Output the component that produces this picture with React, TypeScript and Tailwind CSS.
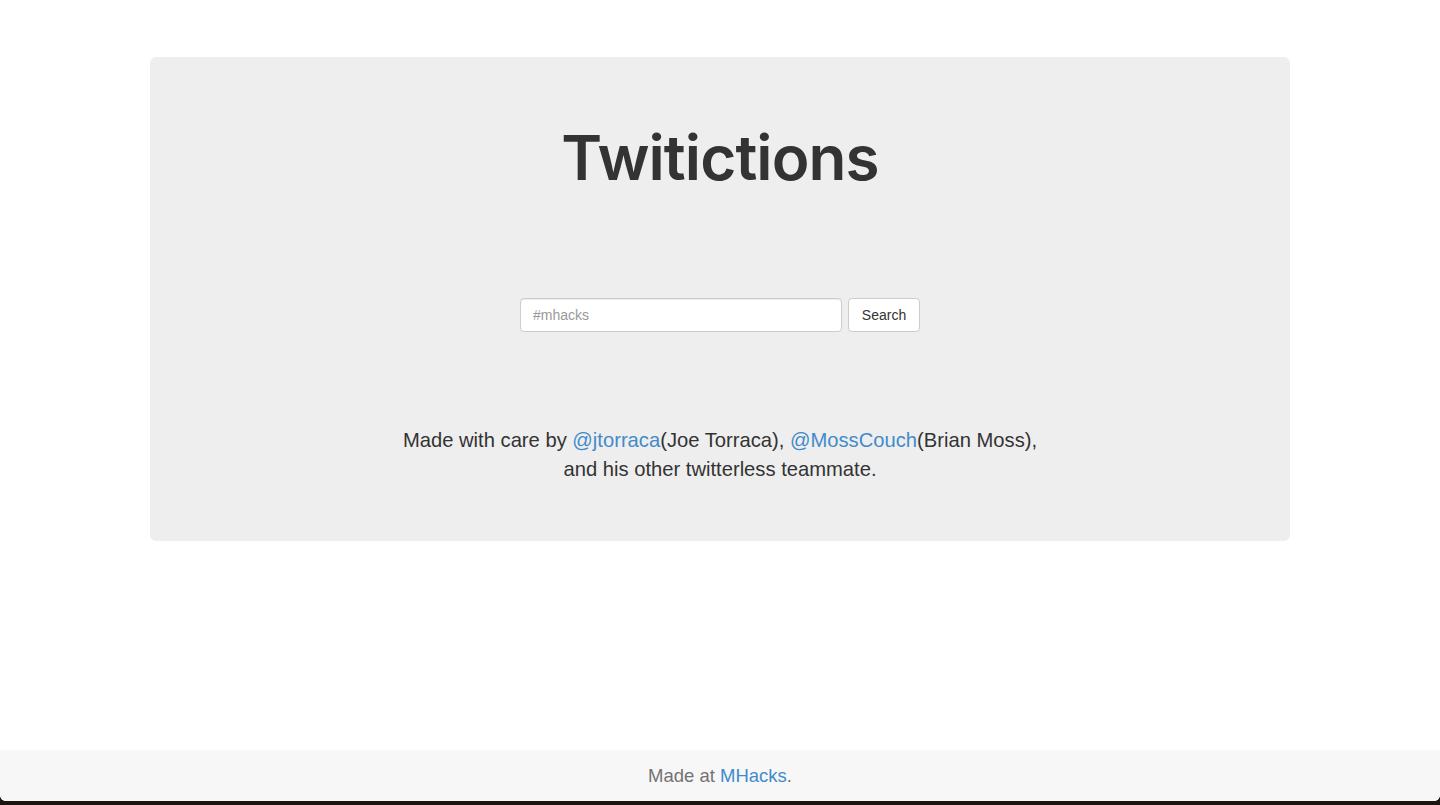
import React from "react";

export default function App() {
  const font = { fontFamily: '"Liberation Sans", Arial, sans-serif' };
  return (
    <div className="h-[805px] w-full bg-[#1b1410] flex flex-col" style={font}>
      <div className="h-[801px] bg-white rounded-b-[6px] overflow-hidden flex flex-col">
        <div className="pt-[57px]">
          <div className="mx-auto w-[1140px] h-[484px] rounded-[6px] bg-[#eeeeee] flex flex-col items-center">
            <h1 className="mt-[66px] text-[62px] leading-[69px] text-[#333333] font-semibold tracking-[-0.9px] font-['Inter',sans-serif]">
              Twitictions
            </h1>
            <div className="mt-[106px] flex items-center gap-[6px]">
              <input
                type="text"
                placeholder="#mhacks"
                className="w-[322px] h-[34px] rounded-[4px] border border-[#cccccc] bg-white px-[12px] text-[14px] text-[#555] placeholder:text-[#999999] outline-none shadow-[inset_0_1px_1px_rgba(0,0,0,0.075)]"
              />
              <button className="w-[72px] h-[34px] rounded-[4px] border border-[#cccccc] bg-white text-[14px] text-[#333333]">
                Search
              </button>
            </div>
            <p className="mt-[94px] text-[20.2px] leading-[29px] text-[#333333] text-center">
              Made with care by <a className="text-[#428bca]">@jtorraca</a>(Joe Torraca),{" "}
              <a className="text-[#428bca]">@MossCouch</a>(Brian Moss),
              <br />
              and his other twitterless teammate.
            </p>
          </div>
        </div>
        <div className="mt-auto h-[51px] bg-[#f7f7f7] flex items-center justify-center">
          <p className="text-[18.5px] text-[#737373] pt-[1px]">
            Made at <a className="text-[#428bca]">MHacks</a>.
          </p>
        </div>
      </div>
    </div>
  );
}
